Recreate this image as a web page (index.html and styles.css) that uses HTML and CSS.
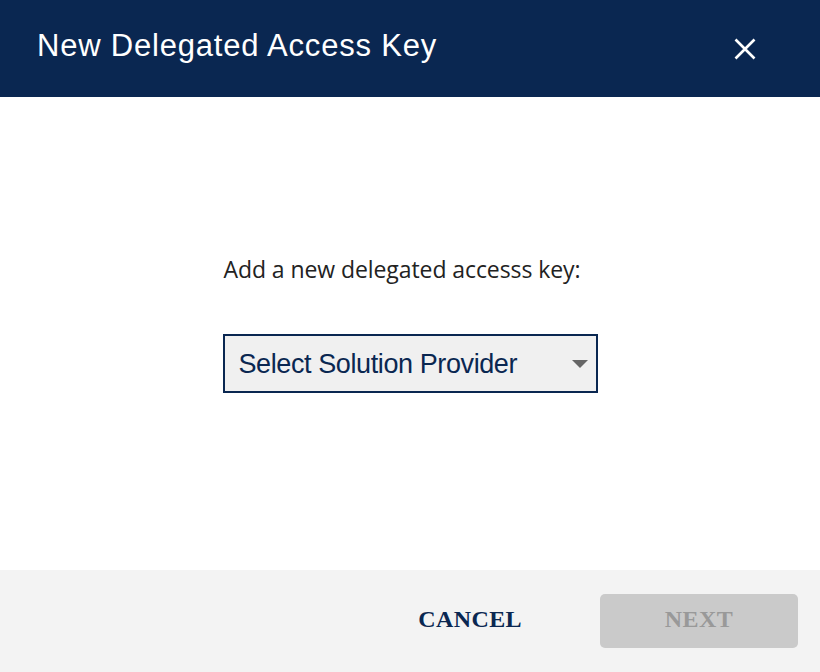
FILE: index.html
```html
<!DOCTYPE html>
<html>
<head>
<meta charset="utf-8">
<link rel="stylesheet" href="styles.css">
</head>
<body>
<div class="dialog">
  <header class="dialog-header">
    <h1 class="dialog-title">New Delegated Access Key</h1>
    <button class="close-btn" aria-label="Close">
      <svg width="22" height="22" viewBox="0 0 22 22"><path d="M1.5 1.5 L20.5 20.5 M20.5 1.5 L1.5 20.5" stroke="#fff" stroke-width="2.6" fill="none"/></svg>
    </button>
  </header>
  <main class="dialog-body">
    <div class="field">
      <p class="field-label">Add a new delegated accesss key:</p>
      <div class="select">
        <span class="select-text">Select Solution Provider</span>
        <span class="select-arrow"></span>
      </div>
    </div>
  </main>
  <footer class="dialog-footer">
    <button class="btn-cancel">CANCEL</button>
    <button class="btn-next" disabled>NEXT</button>
  </footer>
</div>
</body>
</html>
```
FILE: styles.css
```css
html, body {
  margin: 0;
  padding: 0;
  background: #ffffff;
}
.dialog {
  width: 820px;
  height: 672px;
  display: flex;
  flex-direction: column;
}
.dialog-header {
  height: 97px;
  background: #0a2751;
  display: flex;
  align-items: center;
  justify-content: space-between;
  padding: 0 64px 0 37px;
  box-sizing: border-box;
}
.dialog-title {
  margin: 0 0 5px 0;
  color: #ffffff;
  font-family: "Liberation Sans", Arial, sans-serif;
  font-weight: normal;
  font-size: 31px;
  letter-spacing: 0.8px;
}
.close-btn {
  background: none;
  border: 0;
  padding: 0;
  width: 22px;
  height: 22px;
  display: flex;
}
.dialog-body {
  flex: 1;
  display: flex;
  justify-content: center;
  align-items: flex-start;
  padding-top: 156px;
  box-sizing: border-box;
}
.field {
  width: 375px;
}
.field-label {
  margin: 0 0 49px 1px;
  font-family: "Open Sans", sans-serif;
  font-size: 23px;
  color: #222222;
  line-height: 32px;
  letter-spacing: -0.08px;
}
.select {
  height: 59px;
  border: 2px solid #0a2751;
  background: #f0f0f0;
  box-sizing: border-box;
  display: flex;
  align-items: center;
  justify-content: space-between;
  padding: 2px 8px 0 14px;
}
.select-text {
  font-family: "Liberation Sans", Arial, sans-serif;
  font-size: 27px;
  letter-spacing: -0.4px;
  color: #0a2751;
}
.select-arrow {
  width: 0;
  height: 0;
  margin-bottom: 2px;
  border-left: 8px solid transparent;
  border-right: 8px solid transparent;
  border-top: 8px solid #666666;
}
.dialog-footer {
  height: 102px;
  background: #f3f3f3;
  display: flex;
  align-items: center;
  justify-content: flex-end;
  padding-right: 22px;
  box-sizing: border-box;
  gap: 78px;
}
.btn-cancel, .btn-next {
  font-family: "Liberation Serif", "Times New Roman", serif;
  font-weight: bold;
  font-size: 24px;
  letter-spacing: 0.4px;
  border: 0;
  height: 54px;
  padding: 0 0 3px 0;
}
.btn-cancel {
  background: none;
  color: #0a2751;
}
.btn-next {
  width: 198px;
  background: #cacaca;
  color: #999999;
  border-radius: 5px;
}
```
